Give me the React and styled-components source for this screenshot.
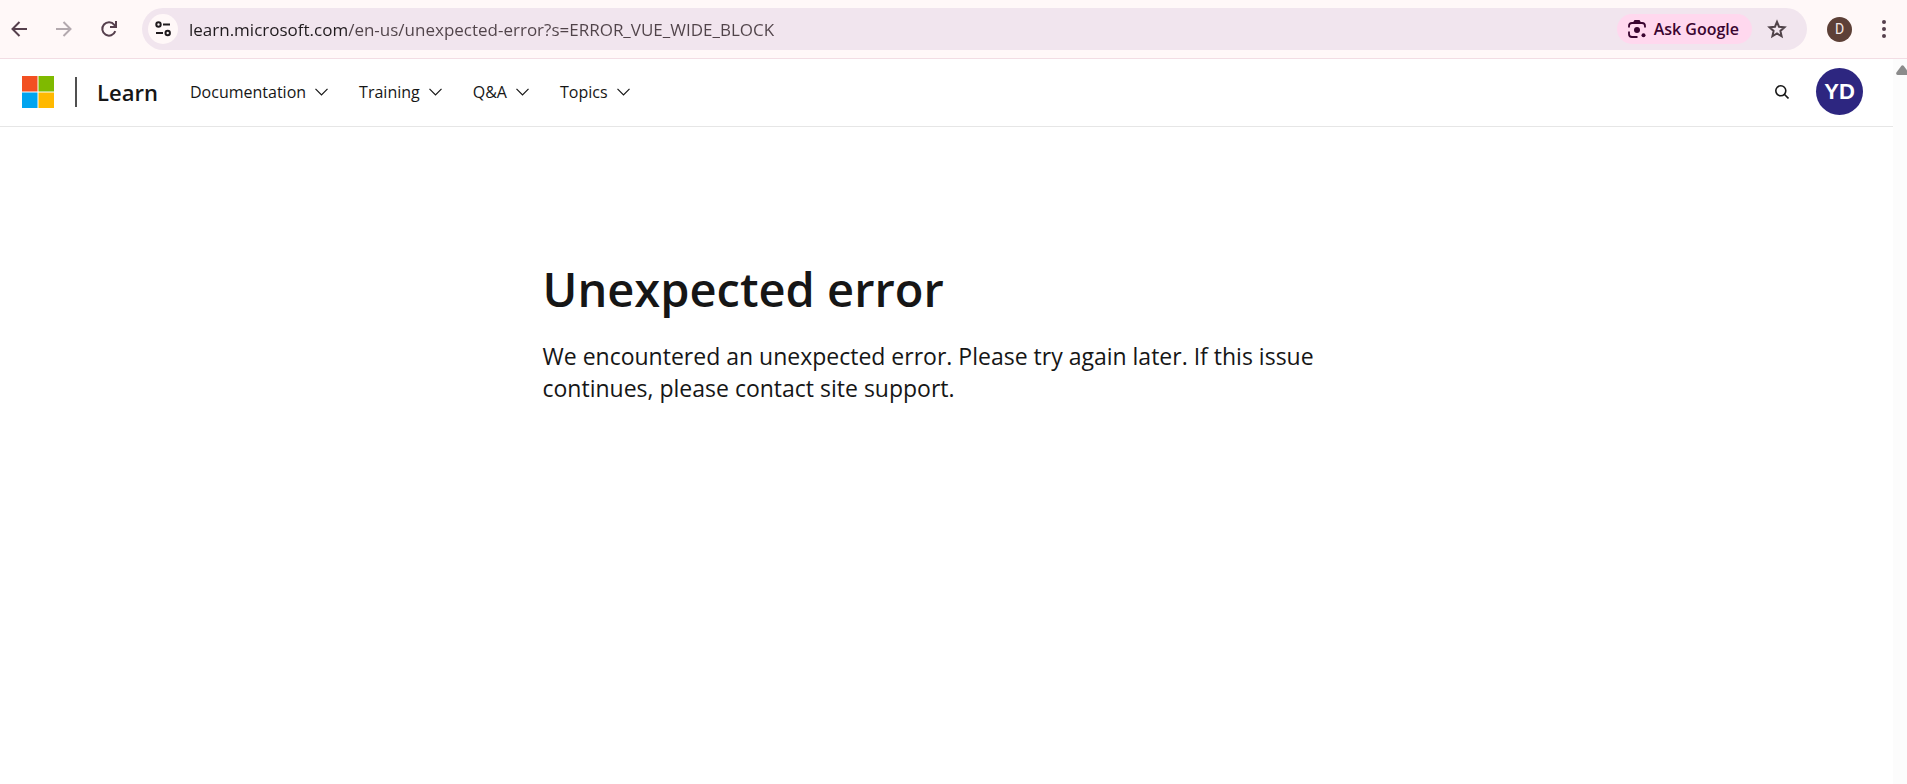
import React, { useState } from 'react'
import styled, { createGlobalStyle } from 'styled-components'

const GlobalStyle = createGlobalStyle`
  * {
    box-sizing: border-box;
  }
  body {
    margin: 0;
    background: #fff;
    color: #161616;
    font-family: 'Open Sans', 'Noto Sans', sans-serif;
  }
  button,
  input {
    padding: 0;
    border: 0;
    background: none;
    color: inherit;
    font: inherit;
  }
  button {
    cursor: pointer;
  }
  svg {
    display: block;
    flex: none;
  }
`

const Window = styled.div`
  display: flex;
  flex-direction: column;
  min-height: 100vh;
`

const Toolbar = styled.div`
  display: flex;
  align-items: center;
  height: 59px;
  padding: 0 13px 0 7px;
  background: #fff8f8;
  border-bottom: 1px solid #f2dde4;
`

const ToolButton = styled.button`
  display: flex;
  align-items: center;
  justify-content: center;
  width: 24px;
  height: 24px;
  margin-right: 21px;
  color: ${p => (p.$muted ? '#b3a9ae' : '#56404d')};
`

const AddressBar = styled.div`
  display: flex;
  flex: 1;
  align-items: center;
  height: 42px;
  padding: 0 20px 0 6px;
  border-radius: 21px;
  background: #f1e5ee;
`

const SiteInfo = styled.button`
  display: flex;
  align-items: center;
  justify-content: center;
  width: 30px;
  height: 30px;
  border-radius: 50%;
  background: #fff8f8;
  color: #1f1a1d;
`

// the host name is darker than the rest of the address
const Address = styled.input`
  flex: 1;
  min-width: 0;
  height: 30px;
  margin: 0 11px;
  outline: none;
  font-size: 17px;
  background: linear-gradient(90deg, #1f1a1d 158px, #504349 158px);
  background-clip: text;
  -webkit-text-fill-color: transparent;
`

const AskButton = styled.button`
  display: flex;
  align-items: center;
  gap: 8px;
  height: 30px;
  margin-right: 15px;
  padding: 0 13px 0 11px;
  border-radius: 15px;
  background: #ffd8ee;
  color: #3a0530;
  font-size: 16px;
  font-weight: 600;
`

const StarButton = styled.button`
  color: #504349;
`

const Profile = styled.button`
  width: 25px;
  height: 25px;
  margin: 0 22px 0 20px;
  border-radius: 50%;
  background: #5d4037;
  color: #f3e9e6;
  font-family: Roboto, sans-serif;
  font-size: 14px;
`

const MenuButton = styled.button`
  display: flex;
  justify-content: center;
  width: 20px;
  color: #56404d;
`

const Viewport = styled.div`
  display: flex;
  flex: 1;
`

const Page = styled.div`
  flex: 1;
  min-width: 0;
`

const ScrollTrack = styled.div`
  width: 14px;
  padding: 6px 0 0 3px;
  overflow: hidden;
  background: #fcfcfc;
`

const Header = styled.header`
  display: flex;
  align-items: center;
  height: 68px;
  padding: 0 30px 2px 22px;
  border-bottom: 1px solid #e6e6e6;
`

const Divider = styled.span`
  width: 2px;
  height: 30px;
  margin: 0 20px 0 21px;
  background: #505050;
`

const Brand = styled.a`
  width: 93px;
  color: #161616;
  font-size: 22px;
  font-weight: 600;
  line-height: 32px;
  text-decoration: none;
`

const Nav = styled.nav`
  display: flex;
  flex: 1;
  gap: 31px;
`

const NavButton = styled.button`
  display: flex;
  align-items: center;
  gap: 9px;
  font-size: 16px;
  line-height: 24px;
`

const SearchButton = styled.button`
  margin-right: 27px;
`

const Avatar = styled.button`
  width: 47px;
  height: 47px;
  border-radius: 50%;
  background: #2d2680;
  color: #fff;
  font-family: 'Liberation Sans', Arial, sans-serif;
  font-size: 22px;
  font-weight: 700;
`

const Main = styled.main`
  max-width: 808px;
  margin: 0 auto;
  padding-top: 127px;
`

const Title = styled.h1`
  margin: 0 0 16px;
  font-size: 47px;
  font-weight: 600;
  line-height: 70px;
`

const Message = styled.p`
  margin: 0;
  font-size: 23px;
  line-height: 32px;
`

const BackIcon = () => (
  <svg width="18" height="18" viewBox="0 0 18 18" fill="none" stroke="currentColor" strokeWidth="2">
    <path d="M17 9H3M9.5 2L2.5 9l7 7" />
  </svg>
)

const ForwardIcon = () => (
  <svg width="18" height="18" viewBox="0 0 18 18" fill="none" stroke="currentColor" strokeWidth="2">
    <path d="M1 9h14M8.5 2l7 7-7 7" />
  </svg>
)

const ReloadIcon = () => (
  <svg width="18" height="18" viewBox="0 0 18 18" fill="none" stroke="currentColor" strokeWidth="2">
    <path d="M15.3 11.2A6.7 6.7 0 1 1 14.3 4.8L15.8 6.6" />
    <path d="M16 1v6h-6" />
  </svg>
)

const TuneIcon = () => (
  <svg width="16" height="16" viewBox="0 0 16 16" fill="none" stroke="currentColor" strokeWidth="2">
    <circle cx="3.5" cy="3.5" r="2.2" />
    <path d="M8 3.5h7M1 12h7" />
    <circle cx="12.7" cy="12" r="2.2" />
  </svg>
)

const LensIcon = () => (
  <svg width="18" height="18" viewBox="0 0 18 18" fill="none" stroke="currentColor" strokeWidth="1.8">
    <path d="M1 7.5V6Q1 3 4 3h10Q17 3 17 6v1.5M1 11.500v2.500Q1 17 4 17h5.500" />
    <path d="M6 2.500L7 1h4l1 1.500" fill="currentColor" />
    <circle cx="9" cy="10" r="3" fill="currentColor" stroke="none" />
    <circle cx="15.5" cy="15.3" r="2" fill="currentColor" stroke="none" />
  </svg>
)

const StarIcon = () => (
  <svg width="20" height="20" viewBox="0 0 20 20" fill="none" stroke="currentColor" strokeWidth="2">
    <path d="M10 2.800l2 4.900 5.500.5-4.100 3.700 1.200 5.400L10 14.500l-4.600 2.800 1.200-5.400L2.500 8.200l5.500-.5z" />
  </svg>
)

const DotsIcon = () => (
  <svg width="4" height="18" viewBox="0 0 4 18" fill="currentColor">
    <circle cx="2" cy="2" r="2" />
    <circle cx="2" cy="9" r="2" />
    <circle cx="2" cy="16" r="2" />
  </svg>
)

const MicrosoftLogo = () => (
  <svg width="32" height="32" viewBox="0 0 32 32">
    <rect width="15.5" height="15.5" fill="#f25022" />
    <rect x="16.5" width="15.5" height="15.5" fill="#7fba00" />
    <rect y="16.5" width="15.5" height="15.5" fill="#00a4ef" />
    <rect x="16.5" y="16.5" width="15.5" height="15.5" fill="#ffb900" />
  </svg>
)

const ChevronIcon = () => (
  <svg width="13" height="8" viewBox="0 0 13 8" fill="none" stroke="currentColor" strokeWidth="1.2">
    <path d="M.5.8l6 6 6-6" />
  </svg>
)

const SearchIcon = () => (
  <svg width="14" height="14" viewBox="0 0 14 14" fill="none" stroke="currentColor" strokeWidth="1.6">
    <circle cx="5.8" cy="5.8" r="5" />
    <path d="M9.3 9.3l4.2 4.2" />
  </svg>
)

const ScrollUpIcon = () => (
  <svg width="13" height="10" viewBox="0 0 13 10" fill="#8b8b8b">
    <path d="M5.4.8Q6.5-.4 7.6.8L12.6 7.4Q13.4 9.8 11.4 10H1.6Q-.4 9.8.4 7.4z" />
  </svg>
)

const MENU = ['Documentation', 'Training', 'Q&A', 'Topics']

const BrowserToolbar = () => {
  const [url, setUrl] = useState('learn.microsoft.com/en-us/unexpected-error?s=ERROR_VUE_WIDE_BLOCK')
  return (
    <Toolbar>
      <ToolButton aria-label="Back">
        <BackIcon />
      </ToolButton>
      <ToolButton aria-label="Forward" $muted>
        <ForwardIcon />
      </ToolButton>
      <ToolButton aria-label="Reload">
        <ReloadIcon />
      </ToolButton>
      <AddressBar>
        <SiteInfo aria-label="View site information">
          <TuneIcon />
        </SiteInfo>
        <Address
          aria-label="Address"
          spellCheck={false}
          value={url}
          onChange={e => setUrl(e.target.value)}
        />
        <AskButton>
          <LensIcon />
          Ask Google
        </AskButton>
        <StarButton aria-label="Bookmark this page">
          <StarIcon />
        </StarButton>
      </AddressBar>
      <Profile aria-label="Profile D">D</Profile>
      <MenuButton aria-label="Browser menu">
        <DotsIcon />
      </MenuButton>
    </Toolbar>
  )
}

const SiteHeader = () => (
  <Header>
    <a href="#microsoft" aria-label="Microsoft">
      <MicrosoftLogo />
    </a>
    <Divider />
    <Brand href="#learn">Learn</Brand>
    <Nav>
      {MENU.map(name => (
        <NavButton key={name} aria-haspopup="true">
          {name}
          <ChevronIcon />
        </NavButton>
      ))}
    </Nav>
    <SearchButton aria-label="Search">
      <SearchIcon />
    </SearchButton>
    <Avatar aria-label="Account YD">YD</Avatar>
  </Header>
)

const App = () => (
  <Window>
    <GlobalStyle />
    <BrowserToolbar />
    <Viewport>
      <Page>
        <SiteHeader />
        <Main>
          <Title>Unexpected error</Title>
          <Message>
            We encountered an unexpected error. Please try again later. If this issue continues,
            please contact site support.
          </Message>
        </Main>
      </Page>
      <ScrollTrack>
        <ScrollUpIcon />
      </ScrollTrack>
    </Viewport>
  </Window>
)

export default App
